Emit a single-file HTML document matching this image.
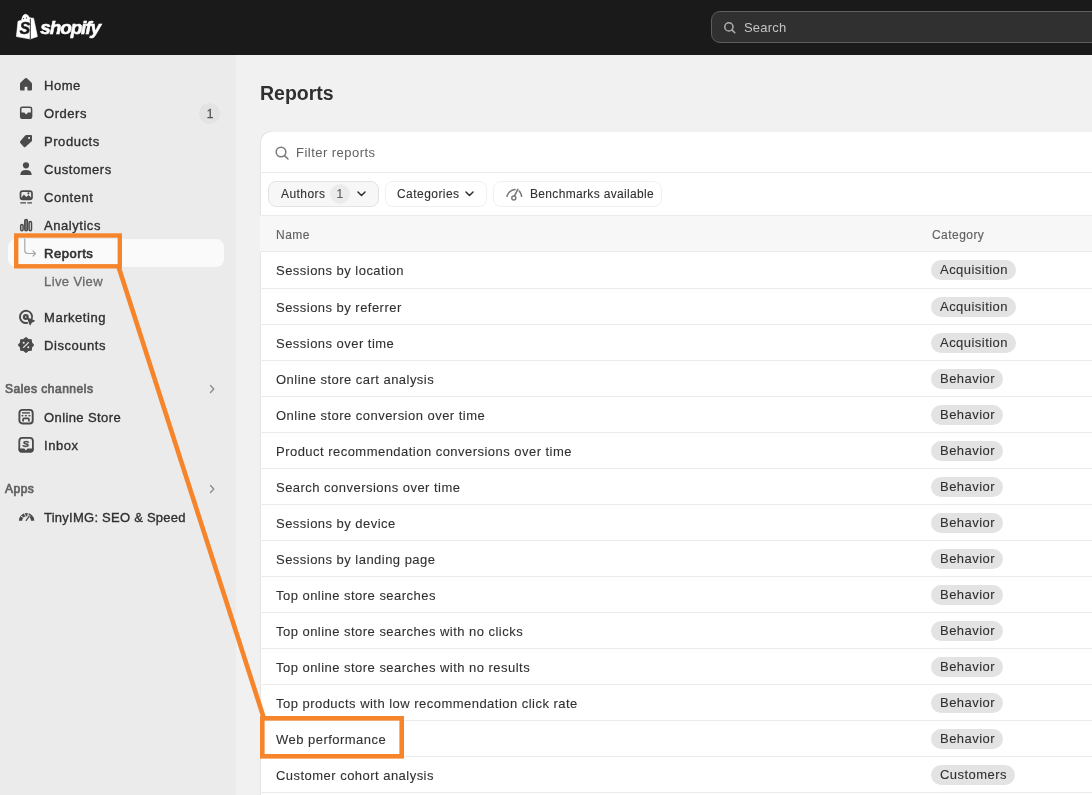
<!DOCTYPE html>
<html><head><meta charset="utf-8"><style>
*{margin:0;padding:0;box-sizing:border-box}
html,body{width:1092px;height:795px;overflow:hidden;background:#f1f1f1;font-family:"Liberation Sans",sans-serif;color:#303030}
.abs{position:absolute}
#top{left:0;top:0;width:1092px;height:55px;background:#1a1a1a}
#search{left:711px;top:11px;width:420px;height:32px;border:1px solid #5e5e5e;border-radius:9px;background:#303030}
#search span{position:absolute;left:32px;top:1px;line-height:30px;font-size:13px;color:#c4c4c4;letter-spacing:.2px}
#side{left:0;top:55px;width:236px;height:740px;background:#ebebeb}
.nav{position:absolute;left:44px;font-size:13px;line-height:28px;color:#303030;white-space:nowrap;-webkit-text-stroke:.35px #303030;letter-spacing:.55px}
.sec{position:absolute;left:5px;font-size:12px;line-height:20px;color:#616161;white-space:nowrap;-webkit-text-stroke:.7px #616161;letter-spacing:.5px}
svg.i{position:absolute;overflow:visible}
#title{left:260px;top:79px;font-size:19.5px;line-height:28px;font-weight:bold;color:#303030}
#card{left:260px;top:131px;width:900px;height:700px;background:#fff;border-radius:12px;box-shadow:inset 1px 0 0 rgba(0,0,0,.1),inset 0 1px 0 rgba(0,0,0,.06)}
.sep{position:absolute;left:0;width:900px;height:1px;background:#ebebeb}
.rt{position:absolute;left:16px;line-height:20px;font-size:13px;letter-spacing:.47px;color:#303030;white-space:nowrap}
.badge{position:absolute;left:671px;height:20px;border-radius:10px;background:#e3e3e3;font-size:13px;line-height:20px;padding:0 8px 0 9px;letter-spacing:.46px;color:#303030;white-space:nowrap}
.abs,.nav,.sec,.rt,.badge,.pill{will-change:transform}
.rt,.badge,.pill{-webkit-text-stroke:.1px #303030}
.pill{position:absolute;top:50px;height:26px;border-radius:8px;border:1px solid #f0f0f0;font-size:12px;line-height:25px;letter-spacing:.45px;color:#303030;white-space:nowrap}
</style></head><body>
<div id="top" class="abs"></div>
<svg class="i" style="left:0;top:0" width="120" height="55" viewBox="0 0 120 55">
<path d="M16.4 36.6 L18 21.3 L21.5 20.2 Q22.6 14.3 25.3 14.3 Q28.2 14.4 29.5 17.8 L33.6 18.2 L37.4 36.6 L30.3 39 Z" fill="#fff" stroke="#fff" stroke-width=".6" stroke-linejoin="round"/>
<path d="M30.3 18.8 L30.3 39" stroke="#1a1a1a" stroke-width=".9"/>
<circle cx="23.6" cy="18.6" r=".55" fill="#1a1a1a"/><circle cx="26.4" cy="17.9" r=".55" fill="#1a1a1a"/>
<text x="19.6" y="34.3" font-family="Liberation Sans" font-weight="bold" font-style="italic" font-size="16" fill="#1a1a1a" stroke="#1a1a1a" stroke-width=".4">S</text>
<text x="40.3" y="33.6" font-family="Liberation Sans" font-weight="bold" font-style="italic" font-size="19" fill="#fff" stroke="#fff" stroke-width=".55" letter-spacing="-1.15">shopify</text>
</svg>
<div id="search" class="abs">
<svg class="i" style="left:11px;top:8.5px" width="14" height="14" viewBox="0 0 14 14"><circle cx="5.9" cy="5.9" r="4.1" fill="none" stroke="#b0b0b0" stroke-width="1.5"/><path d="M8.9 8.9 L11.8 11.8" stroke="#b0b0b0" stroke-width="1.5" stroke-linecap="round"/></svg>
<span>Search</span></div>
<div id="side" class="abs"></div>
<div class="abs" style="left:8px;top:239px;width:216px;height:28px;border-radius:8px;background:#fafafa"></div>
<div class="nav" style="top:71.5px">Home</div>
<div class="nav" style="top:99.5px">Orders</div>
<div class="nav" style="top:127.5px">Products</div>
<div class="nav" style="top:155.5px">Customers</div>
<div class="nav" style="top:183.5px">Content</div>
<div class="nav" style="top:211.5px">Analytics</div>
<div class="nav" style="top:239.5px;-webkit-text-stroke:.6px #303030;letter-spacing:.55px">Reports</div>
<div class="nav" style="top:267.5px;color:#6a6a6a;-webkit-text-stroke:.3px #6a6a6a;letter-spacing:.4px">Live View</div>
<div class="nav" style="top:303.5px">Marketing</div>
<div class="nav" style="top:331.5px">Discounts</div>
<div class="nav" style="top:403.5px;letter-spacing:.4px">Online Store</div>
<div class="nav" style="top:431.5px">Inbox</div>
<div class="nav" style="top:503.5px;letter-spacing:.25px">TinyIMG: SEO &amp; Speed</div>
<div class="abs" style="left:199px;top:102.5px;width:21px;height:20.5px;border-radius:10.5px;background:#e3e3e3;font-size:12px;line-height:22px;text-align:center;color:#555;padding-left:1px;-webkit-text-stroke:.3px #555">1</div>
<div class="sec" style="top:378.5px">Sales channels</div>
<div class="sec" style="top:479px">Apps</div>
<svg class="i" style="left:207px;top:383.5px" width="10" height="10" viewBox="0 0 10 10"><path d="M3.5 1.5 L6.8 5 L3.5 8.5" fill="none" stroke="#8a8a8a" stroke-width="1.3" stroke-linecap="round" stroke-linejoin="round"/></svg>
<svg class="i" style="left:207px;top:483.5px" width="10" height="10" viewBox="0 0 10 10"><path d="M3.5 1.5 L6.8 5 L3.5 8.5" fill="none" stroke="#8a8a8a" stroke-width="1.3" stroke-linecap="round" stroke-linejoin="round"/></svg>
<svg class="i" style="left:16px;top:74px" width="20" height="20" viewBox="0 0 20 20">
<path d="M10 4 Q10.6 4 11.2 4.6 L15.4 8.6 Q16 9.2 16 10 L16 15.6 Q16 16.6 15 16.6 L11.4 16.6 L11.4 13.2 Q11.4 12.8 11 12.8 L9 12.8 Q8.6 12.8 8.6 13.2 L8.6 16.6 L5 16.6 Q4 16.6 4 15.6 L4 10 Q4 9.2 4.6 8.6 L8.8 4.6 Q9.4 4 10 4 Z" fill="#4a4a4a"/></svg>
<svg class="i" style="left:16px;top:102px" width="20" height="20" viewBox="0 0 20 20">
<path d="M6.4 5.3 L13.9 5.3 Q15.6 5.3 15.6 7 L15.6 14.8 Q15.6 16.3 14.1 16.3 L6.1 16.3 Q4.7 16.3 4.7 14.8 L4.7 7 Q4.7 5.3 6.4 5.3 Z" fill="none" stroke="#4a4a4a" stroke-width="1.5"/>
<path d="M4.7 10.6 L8.3 10.6 L10.15 12.4 L12 10.6 L15.6 10.6 L15.6 15 Q15.6 16.3 14.3 16.3 L6 16.3 Q4.7 16.3 4.7 15 Z" fill="#4a4a4a"/></svg>
<svg class="i" style="left:16px;top:130px" width="20" height="20" viewBox="0 0 20 20">
<path d="M4.2 11.2 L9.2 5.6 Q9.7 5.1 10.5 5.1 L15 5.1 Q16 5.1 16 6.1 L16 10.3 Q16 11 15.5 11.5 L9.3 17 Q8.6 17.6 7.9 16.9 L4.3 12.9 Q3.6 12 4.2 11.2 Z" fill="#4a4a4a"/>
<rect x="12.2" y="7.1" width="1.8" height="1.8" fill="#ebebeb"/></svg>
<svg class="i" style="left:16px;top:158px" width="20" height="20" viewBox="0 0 20 20">
<circle cx="10" cy="7.3" r="3.1" fill="#4a4a4a"/>
<path d="M4.3 16.4 Q4.8 12.1 10 12.1 Q15.2 12.1 15.7 16.4 Q15.8 17 15 17 L5 17 Q4.2 17 4.3 16.4 Z" fill="#4a4a4a"/></svg>
<svg class="i" style="left:16px;top:186px" width="20" height="20" viewBox="0 0 20 20">
<rect x="4.5" y="5.2" width="11.5" height="8.2" rx="2.2" fill="none" stroke="#4a4a4a" stroke-width="1.7"/>
<path d="M5 13 L5 12.2 L7.9 8.4 L10.3 10.9 L12.6 8.9 L15.5 12 L15.5 13 Z" fill="#4a4a4a"/><circle cx="12.4" cy="7.3" r="1.1" fill="#4a4a4a"/>
<path d="M4.3 16.9 L10 16.9 M11.3 16.9 L16 16.9" stroke="#4a4a4a" stroke-width="1.3"/></svg>
<svg class="i" style="left:16px;top:214px" width="20" height="20" viewBox="0 0 20 20">
<rect x="4.7" y="10.6" width="2.4" height="6.2" rx="1.2" fill="none" stroke="#4a4a4a" stroke-width="1.5"/>
<rect x="8.8" y="5.5" width="2.6" height="11.3" rx="1.3" fill="#8a8a8a" stroke="#4a4a4a" stroke-width="1.5"/>
<rect x="13.1" y="7.5" width="2.4" height="9.3" rx="1.2" fill="none" stroke="#4a4a4a" stroke-width="1.5"/></svg>
<svg class="i" style="left:16px;top:239px" width="24" height="28" viewBox="0 0 24 28">
<path d="M8.8 0 L8.8 11.5 Q8.8 14.5 11.8 14.5 L19.5 14.5 M17 12 L19.5 14.5 L17 17" fill="none" stroke="#a8a8a8" stroke-width="1.2" stroke-linecap="round" stroke-linejoin="round"/></svg>
<svg class="i" style="left:14px;top:305px" width="24" height="24" viewBox="0 0 24 24">
<path d="M17.7 14.2 A6.1 6.1 0 1 0 13.3 17.9" fill="none" stroke="#4a4a4a" stroke-width="1.9" stroke-linecap="round"/>
<circle cx="11.8" cy="12" r="1.9" fill="none" stroke="#4a4a4a" stroke-width="2.2"/>
<path d="M13.8 13.4 L20.2 15.9 L17.4 17.2 L16.1 19.6 Z" fill="#4a4a4a" stroke="#4a4a4a" stroke-width="1.2" stroke-linejoin="round"/></svg>
<svg class="i" style="left:14px;top:333px" width="24" height="24" viewBox="0 0 24 24">
<path d="M12.00 4.60 L14.26 6.55 L17.23 6.77 L17.45 9.74 L19.40 12.00 L17.45 14.26 L17.23 17.23 L14.26 17.45 L12.00 19.40 L9.74 17.45 L6.77 17.23 L6.55 14.26 L4.60 12.00 L6.55 9.74 L6.77 6.77 L9.74 6.55 Z" fill="#4a4a4a" stroke="#4a4a4a" stroke-width="1.2" stroke-linejoin="round"/>
<path d="M9.6 14.4 L14.4 9.6" stroke="#ebebeb" stroke-width="1.3" stroke-linecap="round"/>
<circle cx="9.7" cy="9.8" r="1" fill="#ebebeb"/><circle cx="14.3" cy="14.2" r="1" fill="#ebebeb"/></svg>
<svg class="i" style="left:16px;top:406px" width="20" height="20" viewBox="0 0 20 20">
<rect x="3.4" y="3.9" width="13.3" height="13.6" rx="3" fill="none" stroke="#4a4a4a" stroke-width="1.9"/>
<rect x="6" y="6.2" width="7.9" height="1.4" fill="#4a4a4a"/>
<ellipse cx="6.4" cy="9.8" rx="1.2" ry=".8" fill="#4a4a4a"/><ellipse cx="9.9" cy="9.8" rx="1.2" ry=".8" fill="#4a4a4a"/><ellipse cx="13.4" cy="9.8" rx="1.2" ry=".8" fill="#4a4a4a"/>
<path d="M7.1 15.6 L7.1 13.3 Q7.1 12.4 8 12.4 L12 12.4 Q12.9 12.4 12.9 13.3 L12.9 15.6" fill="none" stroke="#4a4a4a" stroke-width="1.7"/>
</svg>
<svg class="i" style="left:16px;top:434px" width="20" height="20" viewBox="0 0 20 20">
<rect x="3.3" y="3.9" width="13.6" height="13.8" rx="3" fill="none" stroke="#4a4a4a" stroke-width="1.8"/>
<path d="M2.6 14.6 L8.3 14.6 L9.9 16.5 L11.5 14.6 L17.6 14.6 L17.6 15.6 Q17.6 18.6 14.6 18.6 L5.6 18.6 Q2.6 18.6 2.6 15.6 Z" fill="#4a4a4a"/>
<text x="6.6" y="12.8" font-family="Liberation Sans" font-weight="bold" font-style="italic" font-size="9.8" fill="#4a4a4a" stroke="#4a4a4a" stroke-width=".45">S</text></svg>
<svg class="i" style="left:16px;top:507px" width="20" height="20" viewBox="0 0 20 20">
<path d="M2.9 13.7 A7.6 7.6 0 0 1 18.3 13.7 L15 13.7 A4.4 4.4 0 0 0 6.2 13.7 Z" fill="#4a4a4a"/>
<path d="M5.1 9.2 L7.5 10.6 M8.4 6.3 L9.4 8.8 M12.4 6.2 L11.6 8.8" stroke="#ebebeb" stroke-width="1"/>
<path d="M9.6 13.8 L13.7 8.3" stroke="#ebebeb" stroke-width="2.4"/>
<path d="M9.9 13.8 L13.6 8.6" stroke="#4a4a4a" stroke-width="1.2"/></svg>
<div id="title" class="abs">Reports</div>
<div id="card" class="abs"><svg class="i" style="left:15px;top:15px" width="14" height="14" viewBox="0 0 14 14"><circle cx="6" cy="6" r="4.8" fill="none" stroke="#7a7a7a" stroke-width="1.5"/><path d="M9.6 9.6 L13 13" stroke="#7a7a7a" stroke-width="1.5" stroke-linecap="round"/></svg>
<div class="abs" style="left:36px;top:8px;line-height:28px;font-size:13px;letter-spacing:.47px;color:#616161">Filter reports</div>
<div class="sep" style="top:41px"></div>
<div class="pill" style="left:8px;width:111px;background:#f7f7f7;border-color:#e3e3e3"><span class="abs" style="left:12px">Authors</span><span class="abs" style="left:61px;top:2px;width:20px;height:20px;border-radius:10px;background:#ebebeb;text-align:center;line-height:20px;color:#616161">1</span><svg class="i" style="left:88px;top:9px" width="9" height="6" viewBox="0 0 9 6"><path d="M1 1 L4.5 4.5 L8 1" fill="none" stroke="#303030" stroke-width="1.5" stroke-linecap="round" stroke-linejoin="round"/></svg></div>
<div class="pill" style="left:125px;width:102px"><span class="abs" style="left:11px">Categories</span><svg class="i" style="left:79px;top:9px" width="9" height="6" viewBox="0 0 9 6"><path d="M1 1 L4.5 4.5 L8 1" fill="none" stroke="#303030" stroke-width="1.5" stroke-linecap="round" stroke-linejoin="round"/></svg></div>
<div class="pill" style="left:233px;width:169px"><svg class="i" style="left:10px;top:5px" width="20" height="14" viewBox="0 0 20 14"><path d="M3 9.3 Q4.5 3.5 11 2.5" fill="none" stroke="#7a7a7a" stroke-width="1.6" stroke-linecap="round"/><path d="M15.3 4 Q17 6 17.6 9.3" fill="none" stroke="#7a7a7a" stroke-width="1.6" stroke-linecap="round"/><path d="M10.2 9.6 L13.8 2.3" stroke="#7a7a7a" stroke-width="1.6" stroke-linecap="round"/><circle cx="9.8" cy="11" r="2" fill="#fff" stroke="#7a7a7a" stroke-width="1.5"/></svg><span class="abs" style="left:36px;letter-spacing:.33px">Benchmarks available</span></div>
<div class="abs" style="left:0;top:84px;width:900px;height:36px;background:#f7f7f7;border-top:1px solid #ebebeb"></div>
<div class="abs" style="left:16px;top:87px;line-height:35px;font-size:12px;letter-spacing:.5px;color:#616161;-webkit-text-stroke:.15px #616161">Name</div>
<div class="abs" style="left:672px;top:87px;line-height:35px;font-size:12px;letter-spacing:.45px;color:#616161;-webkit-text-stroke:.15px #616161">Category</div>
<div class="sep" style="top:120px"></div>
<div class="rt" style="top:130px">Sessions by location</div>
<div class="badge" style="top:129px">Acquisition</div>
<div class="sep" style="top:157px"></div>
<div class="rt" style="top:167px">Sessions by referrer</div>
<div class="badge" style="top:166px">Acquisition</div>
<div class="sep" style="top:193px"></div>
<div class="rt" style="top:203px">Sessions over time</div>
<div class="badge" style="top:202px">Acquisition</div>
<div class="sep" style="top:229px"></div>
<div class="rt" style="top:239px">Online store cart analysis</div>
<div class="badge" style="top:238px">Behavior</div>
<div class="sep" style="top:265px"></div>
<div class="rt" style="top:275px">Online store conversion over time</div>
<div class="badge" style="top:274px">Behavior</div>
<div class="sep" style="top:301px"></div>
<div class="rt" style="top:311px">Product recommendation conversions over time</div>
<div class="badge" style="top:310px">Behavior</div>
<div class="sep" style="top:337px"></div>
<div class="rt" style="top:347px">Search conversions over time</div>
<div class="badge" style="top:346px">Behavior</div>
<div class="sep" style="top:373px"></div>
<div class="rt" style="top:383px">Sessions by device</div>
<div class="badge" style="top:382px">Behavior</div>
<div class="sep" style="top:409px"></div>
<div class="rt" style="top:419px">Sessions by landing page</div>
<div class="badge" style="top:418px">Behavior</div>
<div class="sep" style="top:445px"></div>
<div class="rt" style="top:455px">Top online store searches</div>
<div class="badge" style="top:454px">Behavior</div>
<div class="sep" style="top:481px"></div>
<div class="rt" style="top:491px">Top online store searches with no clicks</div>
<div class="badge" style="top:490px">Behavior</div>
<div class="sep" style="top:517px"></div>
<div class="rt" style="top:527px">Top online store searches with no results</div>
<div class="badge" style="top:526px">Behavior</div>
<div class="sep" style="top:553px"></div>
<div class="rt" style="top:563px">Top products with low recommendation click rate</div>
<div class="badge" style="top:562px">Behavior</div>
<div class="sep" style="top:589px"></div>
<div class="rt" style="top:599px">Web performance</div>
<div class="badge" style="top:598px">Behavior</div>
<div class="sep" style="top:625px"></div>
<div class="rt" style="top:635px">Customer cohort analysis</div>
<div class="badge" style="top:634px">Customers</div>
<div class="sep" style="top:661px"></div></div>
<svg class="i" style="left:0;top:0" width="1092" height="795" viewBox="0 0 1092 795">
<rect x="16.2" y="235.5" width="103.6" height="30.8" fill="none" stroke="#f5842a" stroke-width="4.4"/>
<line x1="118.6" y1="267" x2="263.5" y2="717" stroke="#f5842a" stroke-width="4.6"/>
<rect x="262.3" y="718.3" width="139.4" height="38" fill="none" stroke="#f5842a" stroke-width="4.6"/>
</svg>
</body></html>
